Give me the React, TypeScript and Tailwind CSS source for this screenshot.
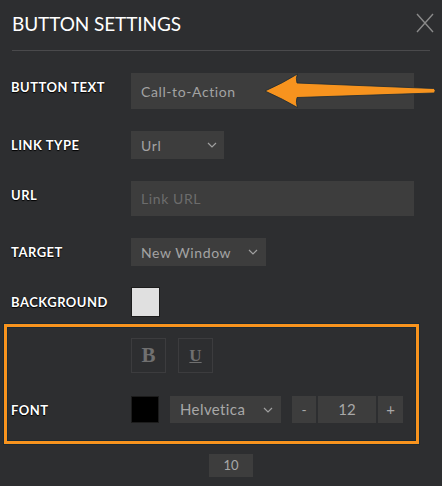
import React from "react";

const Chevron = () => (
  <svg width="10" height="6" viewBox="0 0 10 6" fill="none">
    <path d="M1 1 L5 5 L9 1" stroke="#a0a0a0" strokeWidth="1.2" />
  </svg>
);

const Label = ({ children, className = "" }: { children: React.ReactNode; className?: string }) => (
  <div
    className={`w-[120px] shrink-0 text-[13px] font-bold tracking-[0.5px] text-white leading-[16px] [text-shadow:0_0_1px_#000,0_1px_1px_#000] ${className}`}
  >
    {children}
  </div>
);

export default function App() {
  return (
    <div
      className="relative w-[442px] h-[486px] overflow-hidden bg-[#2d2e30]"
      style={{ fontFamily: "Lato, 'Open Sans', sans-serif" }}
    >
      {/* header */}
      <div className="flex justify-between items-start h-[50px] pl-3 pr-[8px]">
        <div className="pt-[12px] text-[19px] leading-[24px] tracking-[-0.1px] text-white font-normal">
          BUTTON SETTINGS
        </div>
        <svg className="mt-[13px]" width="18" height="20" viewBox="0 0 18 20" fill="none">
          <path d="M1 1 L17 19 M17 1 L1 19" stroke="#8a8a8a" strokeWidth="1.4" />
        </svg>
      </div>
      <div className="mx-3 h-px bg-[#4a4a4c]" />

      <div className="pl-[11px]">
        {/* button text */}
        <div className="flex items-center mt-[22px]">
          <Label className="mb-[8px]">BUTTON TEXT</Label>
          <div className="w-[283px] h-[36px] bg-[#3d3d3d] flex items-center pl-[10px] text-[14px] tracking-[0.6px] text-[#a3a3a3]">
            Call-to-Action
          </div>
        </div>

        {/* link type */}
        <div className="flex items-center mt-[22px]">
          <Label>LINK TYPE</Label>
          <div className="w-[93px] h-[28px] bg-[#3d3d3d] flex items-center justify-between pl-[10px] pr-[7px] text-[14px] tracking-[0.6px] text-[#a3a3a3]">
            <span>Url</span>
            <Chevron />
          </div>
        </div>

        {/* url */}
        <div className="flex items-center mt-[22px]">
          <Label className="mb-[8px]">URL</Label>
          <div className="w-[283px] h-[35px] bg-[#3d3d3d] flex items-center pl-[10px] text-[14px] tracking-[0.6px] text-[#6c6c6c]">
            Link URL
          </div>
        </div>

        {/* target */}
        <div className="flex items-center mt-[22px]">
          <Label>TARGET</Label>
          <div className="w-[135px] h-[28px] bg-[#3d3d3d] flex items-center justify-between pl-[10px] pr-[8px] text-[14px] tracking-[0.6px] text-[#a3a3a3]">
            <span>New Window</span>
            <Chevron />
          </div>
        </div>

        {/* background */}
        <div className="flex items-center mt-[21px]">
          <Label>BACKGROUND</Label>
          <div className="w-[29px] h-[30px] bg-[#e0e0e0] border border-[#1c1c1c]" />
        </div>
      </div>

      {/* highlighted box */}
      <div className="ml-[4px] mt-[7px] w-[415px] border-[3px] border-[#f7931e] outline outline-1 outline-[#1b2a33] shadow-[inset_0_0_0_1px_#1b2a33] pl-[4px] pt-[11px] pb-[18px]">
        <div className="flex gap-[12px] ml-[120px]">
          <div className="w-[35px] h-[35px] border border-[#3c3c3e] flex items-center justify-center text-[21px] font-bold text-[#707070]" style={{ fontFamily: "'Liberation Serif', serif" }}>
            B
          </div>
          <div className="w-[35px] h-[35px] border border-[#3c3c3e] flex items-center justify-center text-[17px] font-bold underline text-[#707070]" style={{ fontFamily: "'Liberation Serif', serif" }}>
            U
          </div>
        </div>
        <div className="flex items-center mt-[23px]">
          <Label>FONT</Label>
          <div className="w-[28px] h-[27px] bg-black border border-[#1c1c1c]" />
          <div className="ml-[11px] w-[111px] h-[27px] bg-[#3d3d3d] flex items-center justify-between pl-[10px] pr-[8px] text-[15px] tracking-[0.4px] text-[#a8a8a8]">
            <span>Helvetica</span>
            <Chevron />
          </div>
          <div className="ml-[11px] w-[24px] h-[27px] bg-[#3d3d3d] flex items-center justify-center text-[14px] text-[#a8a8a8]">
            -
          </div>
          <div className="ml-[2px] w-[58px] h-[27px] bg-[#3d3d3d] flex items-center justify-center text-[15px] text-[#a8a8a8]">
            12
          </div>
          <div className="ml-[2px] w-[25px] h-[27px] bg-[#3d3d3d] flex items-center justify-center text-[15px] text-[#a8a8a8]">
            +
          </div>
        </div>
      </div>

      <div className="ml-[209px] mt-[10px] w-[44px] h-[23px] bg-[#3d3d3d] flex items-center justify-center text-[13px] text-[#a8a8a8]">
        10
      </div>

      {/* annotation arrow */}
      <svg className="absolute left-0 top-0 pointer-events-none" width="442" height="486" viewBox="0 0 442 486">
        <path
          d="M265 91 Q283 83 297.5 74 Q295.5 78 297 83 L433.5 88.5 Q437 90.8 433.5 93 L297 97.5 Q295.5 102 297.5 107.5 Q283 99 265 91 Z"
          fill="#f7931e"
          stroke="#1b2a33"
          strokeWidth="0.8"
        />
      </svg>
    </div>
  );
}
